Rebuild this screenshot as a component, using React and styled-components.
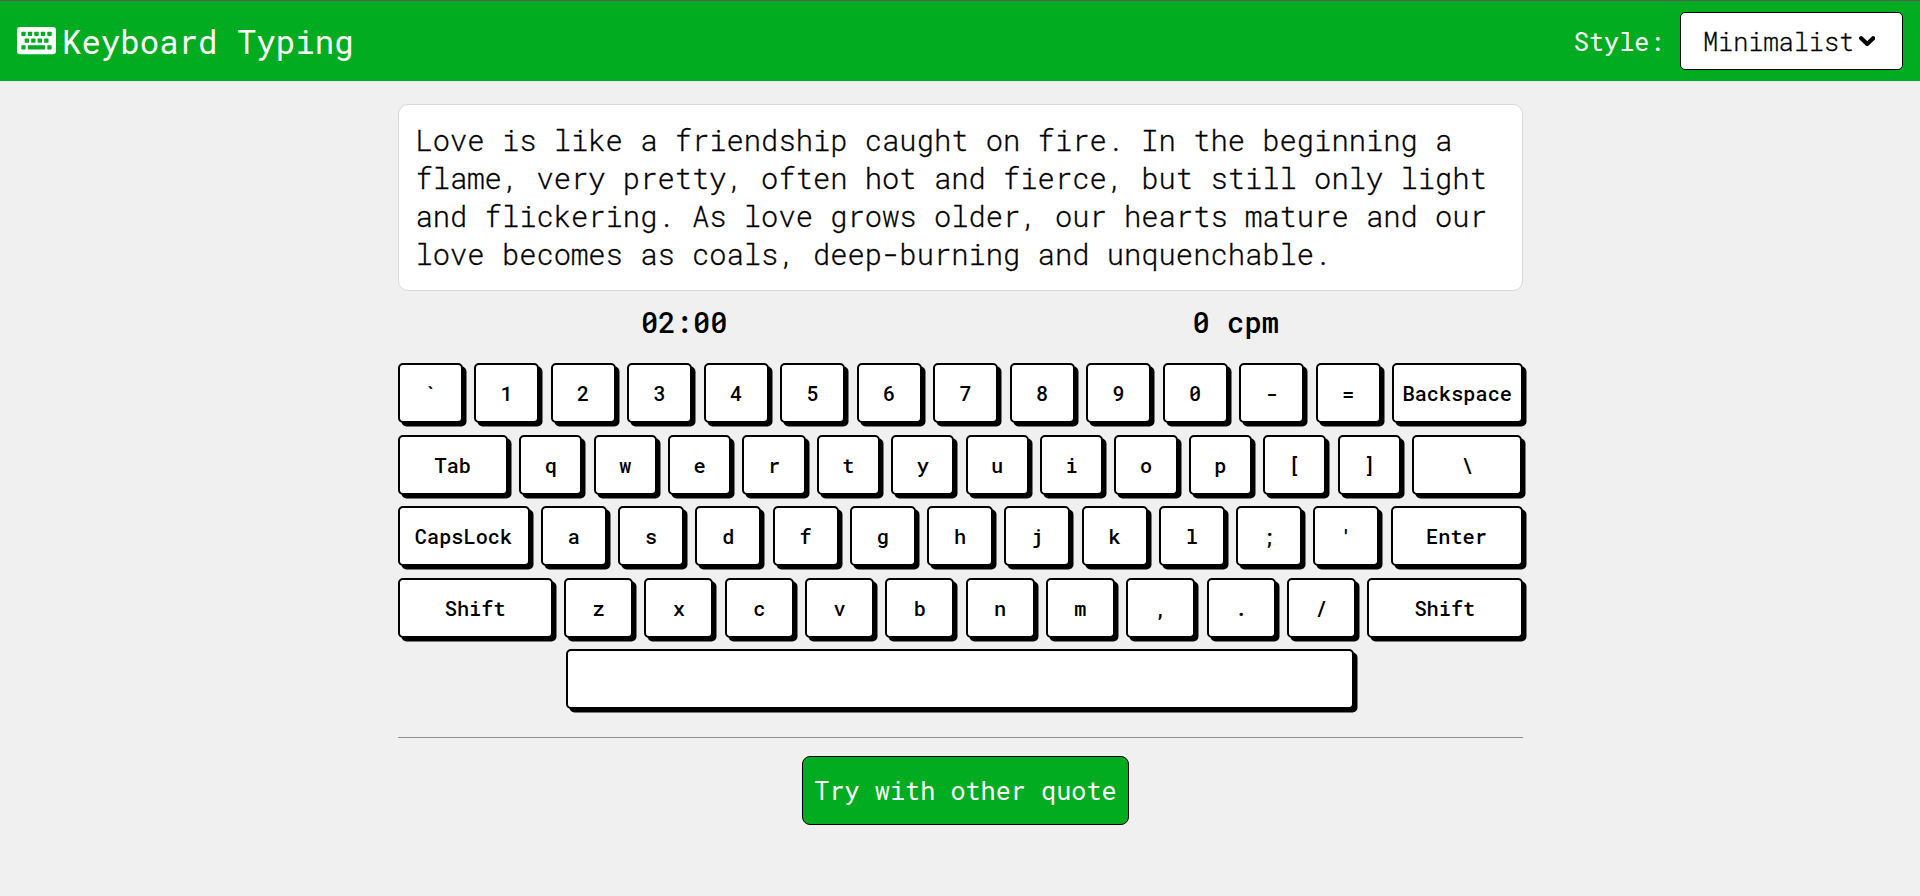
import React from "react";
import styled, { createGlobalStyle } from "styled-components";

const GREEN = "#02ac20";

const GlobalStyle = createGlobalStyle`
  *, *::before, *::after { box-sizing: border-box; }
  body {
    margin: 0;
    background: #f0f0f0;
    color: #000;
    font-family: "Roboto Mono", "Liberation Mono", monospace;
  }
  button { font-family: inherit; }
`;

const Header = styled.header`
  display: flex;
  align-items: center;
  justify-content: space-between;
  height: 81px;
  padding: 0 17px;
  border-top: 1px solid #5c5c5c;
  background: ${GREEN};
  color: #fff;
`;

const Brand = styled.h1`
  display: flex;
  align-items: center;
  gap: 6px;
  margin: 0;
  font-size: 32.4px;
  font-weight: 400;
  line-height: 43px;
  white-space: pre;
`;

const BrandIcon = styled.svg`
  display: block;
  width: 39px;
  height: 27.4px;
`;

const StylePicker = styled.div`
  display: flex;
  align-items: center;
  gap: 15.5px;
  font-size: 25.2px;
  line-height: 33px;
`;

const Select = styled.button`
  display: flex;
  align-items: center;
  gap: 4.5px;
  width: 223px;
  height: 58px;
  padding: 0 0 0 22px;
  border: 1px solid #000;
  border-radius: 5px;
  background: #fff;
  color: #000;
  font-size: 25.2px;
  font-weight: 300;
  -webkit-text-stroke: 0.3px #000;
  line-height: 33px;
`;

const Chevron = styled.svg`
  display: block;
  width: 16.4px;
  height: 10.6px;
`;

const Main = styled.main`
  width: 1125px;
  margin: 23px auto 0;
`;

const Quote = styled.p`
  margin: 0;
  height: 187px;
  padding: 16px 17px;
  border: 1px solid #d9d9d9;
  border-radius: 10px;
  background: #fff;
  font-size: 28.8px;
  font-weight: 300;
  -webkit-text-stroke: 0.3px #000;
  line-height: 38px;
`;

const Stats = styled.div`
  display: grid;
  grid-template-columns: 1fr 1fr;
  padding: 12px 11px 0;
  height: 72px;
  font-size: 28.8px;
  font-weight: 500;
  line-height: 38px;
  text-align: center;
`;

const Keyboard = styled.div`
  display: flex;
  flex-direction: column;
  align-items: center;
  gap: 11.5px;
`;

const Row = styled.div`
  display: grid;
  grid-template-columns: ${(p) => p.$columns || "1fr"};
  gap: 11.25px;
  width: ${(p) => p.$width || "100%"};
`;

const Key = styled.div`
  display: flex;
  align-items: center;
  justify-content: center;
  min-width: 0;
  height: 60px;
  border: 2px solid #000;
  border-radius: 5px;
  background: #fff;
  box-shadow: 3.5px 3.5px 0 #000;
  font-size: 20.3px;
  font-weight: 500;
`;

const Divider = styled.hr`
  height: 1px;
  margin: 28px 0 18px;
  border: 0;
  background: #8f8f8f;
`;

const Actions = styled.div`
  display: flex;
  justify-content: center;
  padding-left: 11px;
`;

const TryButton = styled.button`
  width: 327px;
  height: 69px;
  padding: 0;
  border: 1px solid #000;
  border-radius: 8px;
  background: ${GREEN};
  color: #fff;
  font-size: 25.2px;
  line-height: 33px;
`;

const ROWS = [
  { columns: "repeat(13, 1fr) 2fr", keys: ["`", "1", "2", "3", "4", "5", "6", "7", "8", "9", "0", "-", "=", "Backspace"] },
  { columns: "1.75fr repeat(12, 1fr) 1.75fr", keys: ["Tab", "q", "w", "e", "r", "t", "y", "u", "i", "o", "p", "[", "]", "\\"] },
  { columns: "2fr repeat(11, 1fr) 2fr", keys: ["CapsLock", "a", "s", "d", "f", "g", "h", "j", "k", "l", ";", "'", "Enter"] },
  { columns: "2.25fr repeat(10, 1fr) 2.25fr", keys: ["Shift", "z", "x", "c", "v", "b", "n", "m", ",", ".", "/", "Shift"] },
];

function KeyboardIcon() {
  return (
    <BrandIcon viewBox="0 0 117 82" aria-hidden="true">
      <rect width="117" height="82" rx="10" fill="#fff" />
      <g fill={GREEN}>
        {[13, 32.5, 52, 71.5, 91].map((x) => (
          <rect key={x} x={x} y="14" width="13" height="13" rx="2" />
        ))}
        {[23, 42.5, 62, 81.5].map((x) => (
          <rect key={x} x={x} y="34.5" width="13" height="13" rx="2" />
        ))}
        <rect x="13" y="54.5" width="13" height="13" rx="2" />
        <rect x="32.5" y="54.5" width="52" height="13" rx="2" />
        <rect x="91" y="54.5" width="13" height="13" rx="2" />
      </g>
    </BrandIcon>
  );
}

function ChevronIcon() {
  return (
    <Chevron viewBox="0 0 16.4 10.6" aria-hidden="true">
      <path d="M2.2 2.3 L8.2 8 L14.2 2.3" fill="none" stroke="#000" strokeWidth="4.2" strokeLinecap="round" strokeLinejoin="round" />
    </Chevron>
  );
}

export default function App() {
  return (
    <>
      <GlobalStyle />
      <Header>
        <Brand>
          <KeyboardIcon />
          <span>Keyboard Typing</span>
        </Brand>
        <StylePicker>
          <span>Style:</span>
          <Select type="button">
            Minimalist
            <ChevronIcon />
          </Select>
        </StylePicker>
      </Header>
      <Main>
        <Quote>
          Love is like a friendship caught on fire. In the beginning a flame, very pretty, often hot
          and fierce, but still only light and flickering. As love grows older, our hearts mature and
          our love becomes as coals, deep-burning and unquenchable.
        </Quote>
        <Stats>
          <span>02:00</span>
          <span>0 cpm</span>
        </Stats>
        <Keyboard>
          {ROWS.map(({ columns, keys }, r) => (
            <Row key={r} $columns={columns}>
              {keys.map((label, i) => (
                <Key key={i}>{label}</Key>
              ))}
            </Row>
          ))}
          <Row $width="70%">
            <Key />
          </Row>
        </Keyboard>
        <Divider />
        <Actions>
          <TryButton type="button">Try with other quote</TryButton>
        </Actions>
      </Main>
    </>
  );
}
